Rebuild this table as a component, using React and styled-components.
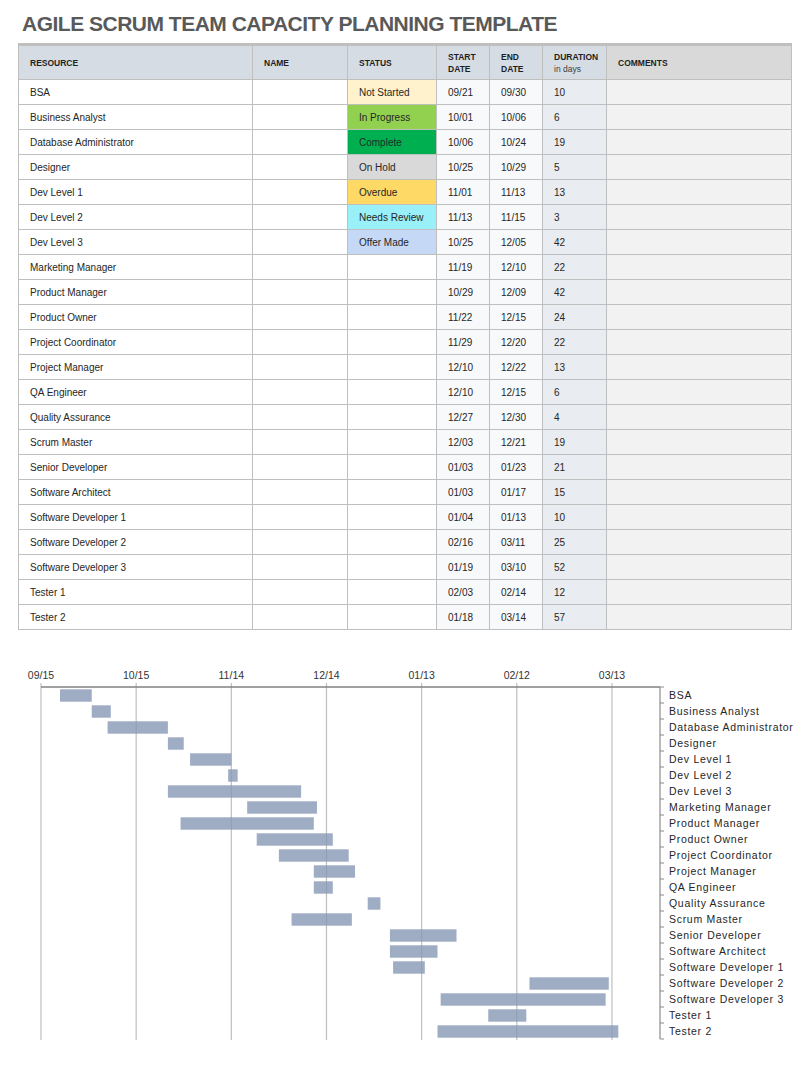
import React from "react";
import styled, { createGlobalStyle } from "styled-components";

const GlobalStyle = createGlobalStyle`
	body {
		margin: 0;
		background: #ffffff;
		font-family: "Liberation Sans", Arial, sans-serif;
		color: #262626;
	}
`;

// resource, status, start, end, duration, start offset (days after 09/15)
const rows = [
	["BSA", "Not Started", "09/21", "09/30", 10, 6],
	["Business Analyst", "In Progress", "10/01", "10/06", 6, 16],
	["Database Administrator", "Complete", "10/06", "10/24", 19, 21],
	["Designer", "On Hold", "10/25", "10/29", 5, 40],
	["Dev Level 1", "Overdue", "11/01", "11/13", 13, 47],
	["Dev Level 2", "Needs Review", "11/13", "11/15", 3, 59],
	["Dev Level 3", "Offer Made", "10/25", "12/05", 42, 40],
	["Marketing Manager", "", "11/19", "12/10", 22, 65],
	["Product Manager", "", "10/29", "12/09", 42, 44],
	["Product Owner", "", "11/22", "12/15", 24, 68],
	["Project Coordinator", "", "11/29", "12/20", 22, 75],
	["Project Manager", "", "12/10", "12/22", 13, 86],
	["QA Engineer", "", "12/10", "12/15", 6, 86],
	["Quality Assurance", "", "12/27", "12/30", 4, 103],
	["Scrum Master", "", "12/03", "12/21", 19, 79],
	["Senior Developer", "", "01/03", "01/23", 21, 110],
	["Software Architect", "", "01/03", "01/17", 15, 110],
	["Software Developer 1", "", "01/04", "01/13", 10, 111],
	["Software Developer 2", "", "02/16", "03/11", 25, 154],
	["Software Developer 3", "", "01/19", "03/10", 52, 126],
	["Tester 1", "", "02/03", "02/14", 12, 141],
	["Tester 2", "", "01/18", "03/14", 57, 125],
];

const statusColors = {
	"Not Started": "#fff2cc",
	"In Progress": "#92d050",
	Complete: "#00b050",
	"On Hold": "#d9d9d9",
	Overdue: "#ffd966",
	"Needs Review": "#99f0f8",
	"Offer Made": "#c5d9f7",
};

const ticks = ["09/15", "10/15", "11/14", "12/14", "01/13", "02/12", "03/13"];

const DAY = 3.172;
const X0 = 21;
const AXIS_Y = 27;
const ROW_H = 16;
const AXIS_END = 640;
const PLOT_BOTTOM = 380;

function App() {
	return (
		<Page>
			<GlobalStyle />
			<Title>AGILE SCRUM TEAM CAPACITY PLANNING TEMPLATE</Title>

			<Table>
				<HeadCell>RESOURCE</HeadCell>
				<HeadCell>NAME</HeadCell>
				<HeadCell>STATUS</HeadCell>
				<HeadCell>
					<span>START</span>
					<span>DATE</span>
				</HeadCell>
				<HeadCell>
					<span>END</span>
					<span>DATE</span>
				</HeadCell>
				<HeadCell>
					<span>DURATION</span>
					<Sub>in days</Sub>
				</HeadCell>
				<HeadCell $bg="#d9d9d9">COMMENTS</HeadCell>

				{rows.map(([name, status, start, end, dur]) => (
					<React.Fragment key={name}>
						<Cell>{name}</Cell>
						<Cell />
						<Cell $bg={statusColors[status]}>{status}</Cell>
						<Cell $bg="#f8f9fb">{start}</Cell>
						<Cell $bg="#f8f9fb">{end}</Cell>
						<Cell $bg="#e9ecf1">{dur}</Cell>
						<Cell $bg="#f2f2f2" />
					</React.Fragment>
				))}
			</Table>

			<Chart>
				<Plot width="645" height="385" viewBox="0 0 645 385">
					{ticks.map((t, i) => {
						const x = X0 + i * 30 * DAY;
						return (
							<g key={t}>
								<line x1={x} x2={x} y1={AXIS_Y - 4} y2={PLOT_BOTTOM} stroke="#bfbfbf" strokeWidth="1.2" />
								<text x={x} y="19" textAnchor="middle" fontSize="10.5" fill="#333">
									{t}
								</text>
							</g>
						);
					})}
					{rows.map(([name, , , , dur, off], i) => (
						<rect
							key={name}
							x={X0 + off * DAY}
							y={AXIS_Y + i * ROW_H + 2.3}
							width={dur * DAY}
							height="12.4"
							fill="#8698b4"
							fillOpacity="0.8"
						/>
					))}
					<line x1={X0} x2={AXIS_END} y1={AXIS_Y} y2={AXIS_Y} stroke="#808080" strokeWidth="1.3" />
					<line x1={AXIS_END} x2={AXIS_END} y1={AXIS_Y} y2={AXIS_Y + rows.length * ROW_H} stroke="#8c8c8c" strokeWidth="1.2" />
					{rows.concat([null]).map((r, i) => (
						<line
							key={i}
							x1={AXIS_END}
							x2={AXIS_END + 4}
							y1={AXIS_Y + i * ROW_H}
							y2={AXIS_Y + i * ROW_H}
							stroke="#8c8c8c"
							strokeWidth="1"
						/>
					))}
				</Plot>
				<Labels>
					{rows.map(([name]) => (
						<Label key={name}>{name}</Label>
					))}
				</Labels>
			</Chart>
		</Page>
	);
}

export default App;

const Page = styled.div`
	width: 811px;
	min-height: 1081px;
	background: #ffffff;
`;

const Title = styled.h1`
	margin: 0 0 7px;
	padding: 12px 0 0 22px;
	font-size: 21px;
	line-height: 24px;
	font-weight: bold;
	letter-spacing: -0.5px;
	color: #595959;
	white-space: nowrap;
`;

const Table = styled.div`
	display: grid;
	grid-template-columns: 234px 95px 89px 53px 53px 64px 185px;
	justify-content: start;
	margin-left: 18px;
	width: max-content;
	border-left: 1px solid #bfbfbf;
	border-top: 3px solid #bfbfbf;
`;

const Cell = styled.div`
	box-sizing: border-box;
	height: 25px;
	padding-left: 11px;
	display: flex;
	align-items: center;
	border-right: 1px solid #bfbfbf;
	border-bottom: 1px solid #bfbfbf;
	background: ${(p) => p.$bg || "#ffffff"};
	font-size: 10px;
	color: #262626;
	white-space: nowrap;
`;

const HeadCell = styled.div`
	box-sizing: border-box;
	height: 34px;
	padding-left: 11px;
	display: flex;
	flex-direction: column;
	justify-content: center;
	border-right: 1px solid #bfbfbf;
	border-bottom: 1px solid #bfbfbf;
	background: ${(p) => p.$bg || "#d6dce4"};
	font-size: 8.5px;
	line-height: 12px;
	font-weight: bold;
	color: #1f1f1f;
	white-space: nowrap;
`;

const Sub = styled.span`
	font-weight: normal;
	font-size: 8.5px;
	color: #404040;
`;

const Chart = styled.div`
	display: flex;
	align-items: flex-start;
	margin-top: 30px;
	padding-left: 20px;
`;

const Plot = styled.svg`
	display: block;
	flex: none;
	font-family: "Liberation Sans", Arial, sans-serif;
`;

const Labels = styled.div`
	margin-top: 27px;
	padding-left: 4px;
	display: flex;
	flex-direction: column;
`;

const Label = styled.div`
	height: 16px;
	line-height: 16px;
	font-size: 10.5px;
	letter-spacing: 0.7px;
	color: #262626;
	white-space: nowrap;
`;
